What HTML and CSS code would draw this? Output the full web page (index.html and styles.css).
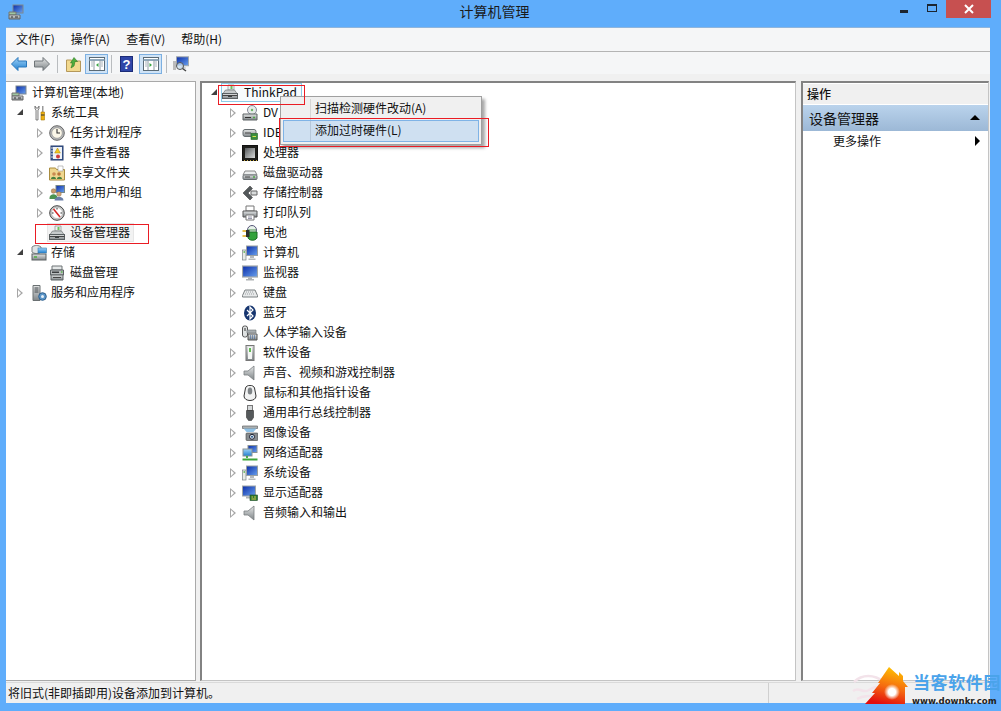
FILE: index.html
```html
<!DOCTYPE html>
<html lang="zh-CN">
<head>
<meta charset="utf-8">
<title>计算机管理</title>
<link rel="stylesheet" href="styles.css">
</head>
<body>
<svg class="defs" width="0" height="0" aria-hidden="true">
<defs>
<linearGradient id="scr" x1="0" y1="0" x2="1" y2="1"><stop offset="0" stop-color="#0a2ca8"/><stop offset="1" stop-color="#6aa2ee"/></linearGradient>
<linearGradient id="gry" x1="0" y1="0" x2="0" y2="1"><stop offset="0" stop-color="#e4e6e6"/><stop offset="1" stop-color="#7f8588"/></linearGradient>
<linearGradient id="blu" x1="0" y1="0" x2="0" y2="1"><stop offset="0" stop-color="#9fd2f7"/><stop offset="1" stop-color="#1f7fd0"/></linearGradient>
<linearGradient id="die" x1="0" y1="0" x2="1" y2="1"><stop offset="0" stop-color="#55585a"/><stop offset="1" stop-color="#d8dadb"/></linearGradient>
<linearGradient id="hs" x1="0.7" y1="0" x2="0.4" y2="1"><stop offset="0" stop-color="#ffc400"/><stop offset="0.55" stop-color="#f56a10"/><stop offset="1" stop-color="#e30d0d"/></linearGradient>
<radialGradient id="hw"><stop offset="0.45" stop-color="#fff"/><stop offset="1" stop-color="#fff" stop-opacity="0"/></radialGradient>
<symbol id="mgmt" viewBox="0 0 16 16"><rect x="5" y="1" width="10" height="8" fill="url(#scr)" stroke="#7c8790"/><path d="M1 8h7v3H1z" fill="#9fc7a0" stroke="#777"/><path d="M1 11h11v4H1z" fill="url(#gry)" stroke="#666"/><path d="M3 13h2M7 13h3" stroke="#333"/></symbol>
<symbol id="tools" viewBox="0 0 16 16"><path d="M4 1v3l1 1v10h2V5l1-1V1L7 3H5z" fill="#eee" stroke="#666" stroke-width=".8"/><path d="M11 1h1.500v6H11z" fill="#999"/><path d="M10 7h3.500v8H10z" fill="#eeb111" stroke="#a87a08" stroke-width=".6"/><path d="M10 10h3.500" stroke="#333"/></symbol>
<symbol id="clock" viewBox="0 0 16 16"><circle cx="8" cy="8" r="7.300" fill="#b7b9ba" stroke="#666"/><circle cx="8" cy="8" r="5.300" fill="#fbf7e8" stroke="#888" stroke-width=".6"/><path d="M8 4v4h3" fill="none" stroke="#333" stroke-width="1.100"/></symbol>
<symbol id="log" viewBox="0 0 16 16"><rect x="2" y="1" width="12" height="14" fill="#3f5f9a" stroke="#243c6c"/><rect x="4" y="2" width="9" height="12" fill="#eef2f6"/><path d="M2 3h2M2 6h2M2 9h2M2 12h2" stroke="#ddd"/><path d="M8.500 3l2.800 5H5.700z" fill="#f2c81e" stroke="#a58309" stroke-width=".5"/><circle cx="9" cy="11.500" r="2" fill="#cf3b3b"/></symbol>
<symbol id="share" viewBox="0 0 16 16"><path d="M0.500 3h6l1 1.500h8v10.500h-15z" fill="#efd78f" stroke="#a98c3f"/><path d="M9 1h5v5H9z" fill="#fff" stroke="#999" stroke-width=".6"/><circle cx="5" cy="9" r="1.800" fill="#c98a52"/><circle cx="10" cy="9" r="1.800" fill="#b9743a"/><path d="M2 14c0-3 5-3 5 0zM8 14c0-3 5-3 5 0z" fill="#46803e"/></symbol>
<symbol id="users" viewBox="0 0 16 16"><rect x="7" y="0.500" width="8.500" height="7" fill="url(#scr)" stroke="#788"/><circle cx="4.500" cy="6" r="2.300" fill="#c99a6b" stroke="#7a5a36" stroke-width=".4"/><path d="M0.500 13c0-5 8-5 8 0v1h-8z" fill="#4c9351"/><circle cx="10" cy="9" r="2.300" fill="#d2a67a" stroke="#7a5a36" stroke-width=".4"/><path d="M5.500 15.500c0-5 9-5 9 0z" fill="#6b7fa8"/></symbol>
<symbol id="perf" viewBox="0 0 16 16"><circle cx="8" cy="8" r="7.300" fill="#c9cccc" stroke="#444"/><circle cx="8" cy="8" r="5.500" fill="#fff" stroke="#999" stroke-width=".5"/><path d="M4.500 4l6.500 8" stroke="#d42424" stroke-width="1.500"/><path d="M8 3v1.500M3 8h1.500M13 8h-1.500" stroke="#333"/></symbol>
<symbol id="dev" viewBox="0 0 16 16"><path d="M6 1h6v5H6z" fill="#eef1f0" stroke="#8a9090" stroke-width=".7"/><path d="M8.500 2h2v3h-2z" fill="#6fbf60"/><path d="M3.500 6h9l2.500 3.500H1z" fill="#c7cbcc" stroke="#6d7274" stroke-width=".7"/><rect x="0.500" y="9.500" width="15" height="5" fill="url(#gry)" stroke="#5a6062"/><path d="M0.500 11.500h15" stroke="#444"/><path d="M6 11.500h4v1.500H6z" fill="#3b3f41"/></symbol>
<symbol id="store" viewBox="0 0 16 16"><path d="M1 2c2-2 7-2 9 0v5c-2 2-7 2-9 0z" fill="#dfe3e4" stroke="#7a8082"/><rect x="7" y="3" width="8.500" height="5" fill="url(#blu)" stroke="#3c7fae" stroke-width=".6"/><rect x="1" y="9" width="14" height="6" fill="url(#gry)" stroke="#5a6062"/><path d="M3 12h3" stroke="#57b04c" stroke-width="1.600"/></symbol>
<symbol id="disk" viewBox="0 0 16 16"><path d="M3 1h10v4H3z" fill="#e4e7e7" stroke="#6e7476"/><path d="M1.500 5h13v5h-13z" fill="#b9bdbe" stroke="#5d6365"/><rect x="3" y="6.500" width="7" height="1.500" fill="#3c3f41"/><path d="M12 7h1.500" stroke="#5ab64c" stroke-width="1.500"/><path d="M2 10h12v5H2z" fill="url(#gry)" stroke="#5d6365"/><path d="M4 12.500h8" stroke="#444"/></symbol>
<symbol id="svc" viewBox="0 0 16 16"><path d="M2 0.500h7v15H2z" fill="url(#gry)" stroke="#6a7072"/><path d="M3.500 3h4M3.500 5h4M3.500 7h4" stroke="#40464a"/><circle cx="11.500" cy="11.500" r="3.800" fill="#5b95c8" stroke="#2f5f8c"/><circle cx="11.500" cy="11.500" r="1.500" fill="#e6f0f8"/></symbol>
<symbol id="dvd" viewBox="0 0 16 16"><circle cx="10" cy="5" r="4.500" fill="#e6ecea" stroke="#889"/><circle cx="10" cy="5" r="1.200" fill="#6fb46a"/><path d="M1 9h14v6H1z" fill="url(#gry)" stroke="#5d6365"/><path d="M3 12.500h6" stroke="#333"/><path d="M11 12.500h2" stroke="#4ea746" stroke-width="1.400"/></symbol>
<symbol id="ide" viewBox="0 0 16 16"><rect x="1" y="4.500" width="13" height="7" rx="2" fill="url(#gry)" stroke="#666d70"/><path d="M3 8h6" stroke="#444"/><rect x="9" y="8.500" width="6.500" height="6" fill="#3a8d3c" stroke="#1f5f21" stroke-width=".6"/><path d="M10.500 11.500h3.500" stroke="#d6e24a"/></symbol>
<symbol id="cpu" viewBox="0 0 16 16"><rect x=".5" y=".5" width="15" height="15" fill="#1f1f1c" stroke="#111"/><rect x="3" y="3" width="10" height="10" fill="url(#die)"/><path d="M2 15.500h1M5 15.500h1M8 15.500h1M11 15.500h1M14 15.500h1" stroke="#c9a83a"/></symbol>
<symbol id="hdd" viewBox="0 0 16 16"><path d="M3 6h10l2 4H1z" fill="#eceeee" stroke="#888"/><rect x="1" y="10" width="14" height="4.500" rx="1" fill="url(#gry)" stroke="#666d70"/><path d="M3 12h5" stroke="#444"/><path d="M11 12h2" stroke="#4ea746" stroke-width="1.300"/></symbol>
<symbol id="ctrl" viewBox="0 0 16 16"><path d="M8 1L1 8l7 7 2.500-2.500L6 8l4.500-4.500z" fill="#53585a" stroke="#333" stroke-width=".5"/><path d="M9 6h6v4H9z" fill="#d9dcdc" stroke="#666"/></symbol>
<symbol id="print" viewBox="0 0 16 16"><path d="M4 1h8v5H4z" fill="#fff" stroke="#777"/><path d="M1 6h14v6H1z" fill="url(#gry)" stroke="#555"/><path d="M4 10h8v5H4z" fill="#fff" stroke="#777"/><path d="M6 12h4M6 13.500h4" stroke="#99a"/></symbol>
<symbol id="batt" viewBox="0 0 16 16"><circle cx="10" cy="5" r="4.500" fill="#e8f2ea" stroke="#557"/><path d="M6 5h8" stroke="#4d8e4e"/><path d="M6 7h9v6c-2 3-7 3-9 0z" fill="#33a23a" stroke="#1d6d22"/><path d="M0.500 6h4M0.500 11h4" stroke="#e0a918" stroke-width="1.300"/><path d="M4 5h3.500v7H4z" fill="#2b2f30"/></symbol>
<symbol id="pc" viewBox="0 0 16 16"><rect x="0.500" y="5" width="3.500" height="10" fill="#e7ebe7" stroke="#7c8486" stroke-width=".7"/><path d="M1.500 7h1.500" stroke="#56b24a" stroke-width="1.400"/><rect x="4.500" y="1" width="11" height="9.500" fill="url(#scr)" stroke="#9aa0a2"/><path d="M8 11h4v2H8zM6.500 13.500h7V15h-7z" fill="#b5b9ba"/></symbol>
<symbol id="mon" viewBox="0 0 16 16"><rect x="0.500" y="1" width="15" height="11" fill="url(#scr)" stroke="#a3a8aa" stroke-width="1.200"/><path d="M6 12.500h4V14H6zM4 14h8v1.500H4z" fill="#aeb2b4"/></symbol>
<symbol id="kbd" viewBox="0 0 16 16"><path d="M3 5h10l2.500 5.500v1.500H0.500v-1.500z" fill="#e7e9ea" stroke="#7b8082"/><path d="M4 7h8M3 9h10" stroke="#9a9fa2" stroke-dasharray="1 1"/></symbol>
<symbol id="bt" viewBox="0 0 16 16"><ellipse cx="8" cy="8" rx="6" ry="7.500" fill="#16356f"/><path d="M5 5l6 6-3 3V2l3 3-6 6" fill="none" stroke="#fff" stroke-width="1.200"/></symbol>
<symbol id="hid" viewBox="0 0 16 16"><rect x="0.500" y="1" width="5" height="11" rx="2" fill="#dfe2e2" stroke="#555"/><path d="M3 3v3" stroke="#333"/><path d="M5 5h9v3H5z" fill="#a8adb0" stroke="#6d7274" stroke-width=".6"/><path d="M6 9h9v6H6z" fill="url(#gry)" stroke="#555"/><path d="M8 11h5M8 13h5" stroke="#335c99" stroke-dasharray="1 1"/></symbol>
<symbol id="soft" viewBox="0 0 16 16"><rect x="4" y="0.500" width="8" height="15" fill="url(#gry)" stroke="#777"/><rect x="6" y="2" width="4" height="12" fill="#f4f6f4"/><path d="M8 3v4" stroke="#62bb55" stroke-width="2"/></symbol>
<symbol id="spk" viewBox="0 0 16 16"><path d="M2 6h4l6-5v14l-6-5H2z" fill="url(#gry)" stroke="#787e80" stroke-width=".8"/></symbol>
<symbol id="mouse" viewBox="0 0 16 16"><path d="M3.500 3c1-3.500 8-3.500 9 0l1.500 8c0 6-12 6-12 0z" fill="#f1f2f2" stroke="#333"/><ellipse cx="8" cy="6" rx="2.300" ry="3.500" fill="#7e8386"/></symbol>
<symbol id="usb" viewBox="0 0 16 16"><rect x="5.500" y="0.500" width="5" height="5" fill="#d5d8d9" stroke="#777"/><path d="M4.500 5.500h7v7l-2 3h-3l-2-3z" fill="#55595b" stroke="#333" stroke-width=".6"/></symbol>
<symbol id="img" viewBox="0 0 16 16"><path d="M0.500 1h15v2.500h-15z" fill="#aab0b2" stroke="#666" stroke-width=".7"/><path d="M1.500 3.500h13l-3 3.500h-7z" fill="#8fc1e6"/><rect x="4" y="8" width="12" height="7.500" rx="1" fill="#878c8f" stroke="#444" stroke-width=".6"/><circle cx="10" cy="11.800" r="2.500" fill="#dbe8f2" stroke="#223"/><circle cx="10" cy="11.800" r="1" fill="#27578a"/></symbol>
<symbol id="net" viewBox="0 0 16 16"><rect x="6" y="0.500" width="9" height="7" fill="url(#scr)" stroke="#8a9294"/><rect x="1" y="4" width="9" height="7" fill="url(#blu)" stroke="#8a9294"/><path d="M5 11v2M0.500 14.500h15" stroke="#3ea63b" stroke-width="1.800"/></symbol>
<symbol id="disp" viewBox="0 0 16 16"><rect x="0.500" y="1" width="13" height="10" fill="url(#scr)" stroke="#a0a6a8"/><path d="M4 11.500h6v2H4z" fill="#aeb2b4"/><rect x="8" y="10" width="7.500" height="5.500" fill="#2d7a34" stroke="#1a4a1f" stroke-width=".6"/><path d="M9.500 12h1.500M12 12h2M9.500 14h4.500" stroke="#d9c84a"/></symbol>
</defs>
</svg>

<div class="window">
  <header class="titlebar">
    <svg class="ico app-ico"><use href="#mgmt"/></svg>
    <div class="title">计算机管理</div>
    <div class="controls">
      <span class="ctl-min"></span>
      <span class="ctl-max"></span>
      <span class="ctl-close">
        <svg width="10" height="10" viewBox="0 0 10 10"><path d="M1 1l8 8M9 1l-8 8" stroke="#fff" stroke-width="2"/></svg>
      </span>
    </div>
  </header>

  <main class="client">
    <nav class="menubar">
      <span>文件(F)</span><span>操作(A)</span><span>查看(V)</span><span>帮助(H)</span>
    </nav>

    <div class="toolbar">
      <svg class="tool t-back" width="16" height="14" viewBox="0 0 16 14"><path d="M0.500 7L7 0.500V4h8.500v6H7v3.500z" fill="url(#blu)" stroke="#2a78bd"/></svg>
      <svg class="tool t-fwd" width="16" height="14" viewBox="0 0 16 14"><path d="M15.500 7L9 0.500V4H0.500v6H9v3.500z" fill="url(#gry)" stroke="#6f7578"/></svg>
      <span class="sep"></span>
      <svg class="tool t-up" width="15" height="16" viewBox="0 0 15 16"><path d="M0.500 4h5l1 1h8v10.500H.5z" fill="#f2d98e" stroke="#b5985a"/><path d="M5 12l1.500-5H4.500l3.500-5.500 3.500 4H9L8 10z" fill="#4fae3e" stroke="#2d7a22" stroke-width=".6"/></svg>
      <span class="togglebtn">
        <svg width="16" height="14" viewBox="0 0 16 14"><rect x=".5" y=".5" width="15" height="13" fill="#fff" stroke="#5a6a75"/><path d="M.5 3h15" stroke="#8fa8bb" stroke-width="2"/><path d="M5 3v10M11 3v10" stroke="#8e9aa3"/><path d="M9.500 6v4L7 8z" fill="#3aa543"/><path d="M2 5h2M2 7h2M2 9h2M12 5h2M12 7h2M12 9h2" stroke="#aab4bb"/></svg>
      </span>
      <span class="sep sep-b"></span>
      <svg class="tool t-help" width="13" height="16" viewBox="0 0 13 16"><rect x=".5" y=".5" width="12" height="15" fill="#2f46a8" stroke="#1c2c78"/><text x="6.500" y="12.500" class="helpq" text-anchor="middle">?</text></svg>
      <span class="togglebtn tb-b">
        <svg width="16" height="14" viewBox="0 0 16 14"><rect x=".5" y=".5" width="15" height="13" fill="#fff" stroke="#5a6a75"/><path d="M.5 3h15" stroke="#8fa8bb" stroke-width="2"/><path d="M5 3v10M11 3v10" stroke="#8e9aa3"/><path d="M6.500 6v4L9 8z" fill="#3aa543"/><path d="M2 5h2M2 7h2M2 9h2M12 5h2M12 7h2M12 9h2" stroke="#aab4bb"/></svg>
      </span>
      <span class="sep sep-c"></span>
      <svg class="tool t-scan" width="16" height="16"><use href="#mon" x="3" width="13" height="13"/><circle cx="7" cy="10" r="3.500" fill="#cfe4f5" fill-opacity=".7" stroke="#555"/><path d="M0 5h3v9H0z" fill="#bbb"/><path d="M9.500 12.500L13 15" stroke="#444" stroke-width="1.500"/></svg>
    </div>

    <div class="panes">
      <section class="pane pane-left">
        <div class="row r0"><svg class="ico"><use href="#mgmt"/></svg><span class="label">计算机管理(本地)</span></div>
        <div class="row l1"><i class="tw open"></i><svg class="ico"><use href="#tools"/></svg><span class="label">系统工具</span></div>
        <div class="row l2"><i class="tw"></i><svg class="ico"><use href="#clock"/></svg><span class="label">任务计划程序</span></div>
        <div class="row l2"><i class="tw"></i><svg class="ico"><use href="#log"/></svg><span class="label">事件查看器</span></div>
        <div class="row l2"><i class="tw"></i><svg class="ico"><use href="#share"/></svg><span class="label">共享文件夹</span></div>
        <div class="row l2"><i class="tw"></i><svg class="ico"><use href="#users"/></svg><span class="label">本地用户和组</span></div>
        <div class="row l2"><i class="tw"></i><svg class="ico"><use href="#perf"/></svg><span class="label">性能</span></div>
        <div class="row l2 selected-dim"><i class="tw none"></i><svg class="ico"><use href="#dev"/></svg><span class="label">设备管理器</span></div>
        <div class="row l1"><i class="tw open"></i><svg class="ico"><use href="#store"/></svg><span class="label">存储</span></div>
        <div class="row l2"><i class="tw none"></i><svg class="ico"><use href="#disk"/></svg><span class="label">磁盘管理</span></div>
        <div class="row l1"><i class="tw"></i><svg class="ico"><use href="#svc"/></svg><span class="label">服务和应用程序</span></div>
        <span class="redbox rb-tree"></span>
      </section>

      <section class="pane pane-center">
        <div class="row c0"><i class="tw open"></i><span class="root-sel"><svg class="ico"><use href="#dev"/></svg><span class="label">ThinkPad</span></span></div>
        <div class="row c1"><i class="tw"></i><svg class="ico"><use href="#dvd"/></svg><span class="label">DV</span></div>
        <div class="row c1"><i class="tw"></i><svg class="ico"><use href="#ide"/></svg><span class="label">IDE</span></div>
        <div class="row c1"><i class="tw"></i><svg class="ico"><use href="#cpu"/></svg><span class="label">处理器</span></div>
        <div class="row c1"><i class="tw"></i><svg class="ico"><use href="#hdd"/></svg><span class="label">磁盘驱动器</span></div>
        <div class="row c1"><i class="tw"></i><svg class="ico"><use href="#ctrl"/></svg><span class="label">存储控制器</span></div>
        <div class="row c1"><i class="tw"></i><svg class="ico"><use href="#print"/></svg><span class="label">打印队列</span></div>
        <div class="row c1"><i class="tw"></i><svg class="ico"><use href="#batt"/></svg><span class="label">电池</span></div>
        <div class="row c1"><i class="tw"></i><svg class="ico"><use href="#pc"/></svg><span class="label">计算机</span></div>
        <div class="row c1"><i class="tw"></i><svg class="ico"><use href="#mon"/></svg><span class="label">监视器</span></div>
        <div class="row c1"><i class="tw"></i><svg class="ico"><use href="#kbd"/></svg><span class="label">键盘</span></div>
        <div class="row c1"><i class="tw"></i><svg class="ico"><use href="#bt"/></svg><span class="label">蓝牙</span></div>
        <div class="row c1"><i class="tw"></i><svg class="ico"><use href="#hid"/></svg><span class="label">人体学输入设备</span></div>
        <div class="row c1"><i class="tw"></i><svg class="ico"><use href="#soft"/></svg><span class="label">软件设备</span></div>
        <div class="row c1"><i class="tw"></i><svg class="ico"><use href="#spk"/></svg><span class="label">声音、视频和游戏控制器</span></div>
        <div class="row c1"><i class="tw"></i><svg class="ico"><use href="#mouse"/></svg><span class="label">鼠标和其他指针设备</span></div>
        <div class="row c1"><i class="tw"></i><svg class="ico"><use href="#usb"/></svg><span class="label">通用串行总线控制器</span></div>
        <div class="row c1"><i class="tw"></i><svg class="ico"><use href="#img"/></svg><span class="label">图像设备</span></div>
        <div class="row c1"><i class="tw"></i><svg class="ico"><use href="#net"/></svg><span class="label">网络适配器</span></div>
        <div class="row c1"><i class="tw"></i><svg class="ico"><use href="#pc"/></svg><span class="label">系统设备</span></div>
        <div class="row c1"><i class="tw"></i><svg class="ico"><use href="#disp"/></svg><span class="label">显示适配器</span></div>
        <div class="row c1"><i class="tw"></i><svg class="ico"><use href="#spk"/></svg><span class="label">音频输入和输出</span></div>

        <div class="ctxmenu">
          <div class="ctx-item">扫描检测硬件改动(A)</div>
          <div class="ctx-item hot">添加过时硬件(L)</div>
        </div>
        <span class="redbox rb-root"></span>
        <span class="redbox rb-item"></span>
      </section>

      <aside class="pane pane-right">
        <div class="act-head">操作</div>
        <div class="act-group"><span>设备管理器</span><i class="tri-up"></i></div>
        <div class="act-item"><span>更多操作</span><i class="tri-right"></i></div>
      </aside>
    </div>

    <footer class="statusbar">
      <span class="st-main">将旧式(非即插即用)设备添加到计算机。</span>
      <span class="st-cell"></span>
    </footer>
  </main>

  <div class="watermark">
    <svg class="wm-swirl" width="34" height="30" viewBox="0 0 34 30"><g fill="none" stroke="#f3e3ea" stroke-width="2.500"><path d="M2 9C10 1 22 1 32 9"/><path d="M1 18c7-5 9 3 16-1s9-4 16 1"/><path d="M5 26c7-4 17-4 24 0"/></g></svg>
    <svg class="wm-house" width="43" height="37" viewBox="0 0 43 37"><path d="M0 37L10 26H7L15 16H13L24 0L34 9V5L38 9V14L43 20H40V37Z" fill="url(#hs)"/><circle cx="27" cy="25" r="8" fill="url(#hw)"/></svg>
    <div class="wm-name">当客软件园</div>
    <div class="wm-url">www.downkr.com</div>
  </div>
</div>
</body>
</html>
```

FILE: styles.css
```css
* { box-sizing: border-box; }

html, body {
  margin: 0;
  padding: 0;
  width: 1001px;
  height: 711px;
  overflow: hidden;
}

body {
  font-family: "Noto Sans CJK SC", "Liberation Sans", sans-serif;
  font-size: 12px;
  color: #111;
  background: #5fadfb;
}

.defs { position: absolute; }

.window {
  position: relative;
  width: 1001px;
  height: 711px;
  display: flex;
  flex-direction: column;
  background: #5fadfb;
}

.ico { width: 16px; height: 16px; flex: none; display: block; }

/* title bar */
.titlebar {
  position: relative;
  height: 27px;
  flex: none;
  display: flex;
  align-items: flex-start;
  padding: 4px 10px 0 8px;
}
.title {
  position: absolute;
  left: 0;
  right: 12px;
  top: 1px;
  text-align: center;
  font-size: 14px;
  line-height: 20px;
  color: #1a1a1a;
}
.controls {
  position: absolute;
  top: 0;
  right: 10px;
  display: flex;
}
.ctl-min {
  width: 8px;
  height: 3px;
  margin: 10px 19px 0 0;
  background: #1c2530;
}
.ctl-max {
  width: 10px;
  height: 8px;
  margin: 4px 9px 0 0;
  border: 1px solid #1c2530;
  border-top-width: 2px;
}
.ctl-close {
  width: 45px;
  height: 18px;
  background: #c75050;
  display: flex;
  align-items: center;
  justify-content: center;
}

/* client */
.client {
  margin: 0 11px 8px 6px;
  flex: 1;
  min-height: 0;
  display: flex;
  flex-direction: column;
  background: #f0f0f0;
  border-top: 1px solid #8fb5dc;
}

.menubar {
  height: 24px;
  flex: none;
  display: flex;
  gap: 16px;
  align-items: center;
  padding: 0 0 2px 10px;
  background: #f5f6f7;
  border-bottom: 1px solid #b4b4b4;
  line-height: 16px;
}

.toolbar {
  height: 22px;
  flex: none;
  display: flex;
  align-items: center;
  padding: 1px 0 0 5px;
  background: #f5f6f7;
}
.tool { flex: none; display: block; }
.t-fwd { margin-left: 7px; }
.t-up { margin-left: 8px; }
.t-help { margin-left: 8px; }
.t-scan { margin-left: 6px; }
.sep {
  width: 1px;
  height: 18px;
  margin-left: 7px;
  background: #b9bcbf;
}
.sep-b { margin-left: 3px; }
.sep-c { margin-left: 4px; }
.togglebtn {
  width: 23px;
  height: 20px;
  margin-left: 4px;
  display: flex;
  align-items: center;
  justify-content: center;
  background: #cfe3f6;
  border: 1px solid #7cb0e2;
}
.tb-b { margin-left: 6px; }
.helpq {
  font-family: "Liberation Sans", sans-serif;
  font-size: 13px;
  font-weight: 700;
  fill: #fff;
}

/* panes */
.panes {
  margin-top: 7px;
  flex: 1;
  min-height: 0;
  display: flex;
}
.pane {
  position: relative;
  background: #fff;
  height: 600px;
}
.pane-left {
  width: 190px;
  margin-right: 4px;
  border: 1px solid #a9a9a9;
  border-left: 0;
}
.pane-center {
  width: 596px;
  margin-right: 5px;
  border-top: 2px solid #828282;
  border-left: 2px solid #828282;
  border-right: 1px solid #c4c4c4;
  border-bottom: 1px solid #c4c4c4;
}
.pane-right {
  width: 188px;
  border-top: 2px solid #828282;
  border-left: 2px solid #828282;
  border-right: 1px solid #c4c4c4;
  border-bottom: 1px solid #c4c4c4;
  padding-top: 1px;
}

/* trees */
.row {
  height: 20px;
  display: flex;
  align-items: center;
  white-space: nowrap;
}
.row .ico { margin-top: 2px; }
.label { margin-left: 5px; line-height: 16px; }
.r0 { padding-left: 5px; }
.l1 { padding-left: 9px; }
.l2 { padding-left: 29px; }
.l1 .ico { margin-left: 6px; }
.l1 .label { margin-left: 4px; }
.l2 .ico { margin-left: 4px; }
.c0 { padding-left: 7px; margin-top: -1px; }
.c1 { padding-left: 26px; }
.c1 .ico { margin-left: 4px; }

.tw {
  width: 10px;
  height: 10px;
  flex: none;
  position: relative;
  display: block;
}
.tw::before {
  content: "";
  position: absolute;
  left: 2px;
  top: 1px;
  width: 0;
  height: 0;
  border-left: 6px solid #a6a6a6;
  border-top: 5px solid transparent;
  border-bottom: 5px solid transparent;
}
.tw::after {
  content: "";
  position: absolute;
  left: 3px;
  top: 3px;
  width: 0;
  height: 0;
  border-left: 3px solid #fff;
  border-top: 3px solid transparent;
  border-bottom: 3px solid transparent;
}
.tw.open::before {
  left: 2px;
  top: 2px;
  border-left: 6px solid transparent;
  border-top: 0;
  border-bottom: 6px solid #404040;
}
.tw.open::after, .tw.none::before, .tw.none::after { display: none; }

.selected-dim { position: relative; }
.selected-dim::before {
  content: "";
  position: absolute;
  left: 41px;
  right: 61px;
  top: 1px;
  bottom: 0;
  background: #f2f2f2;
  border: 1px solid #e6e6e6;
  z-index: 0;
}
.selected-dim .ico, .selected-dim .label { position: relative; z-index: 1; }

.root-sel {
  display: flex;
  align-items: center;
  height: 19px;
  width: 81px;
  margin-left: 2px;
  border: 1px solid #8fcbe8;
  background: #f7fbfd;
}
.root-sel .ico { margin-top: 0; }
.root-sel .label { margin-left: 6px; }

/* context menu */
.ctxmenu {
  position: absolute;
  left: 78px;
  top: 13px;
  width: 202px;
  height: 49px;
  padding: 1px 2px;
  background: #f0f0f0;
  border: 1px solid #a0a0a0;
  box-shadow: 3px 3px 3px rgba(0, 0, 0, .35);
}
.ctxmenu::before {
  content: "";
  position: absolute;
  left: 29px;
  top: 2px;
  bottom: 2px;
  width: 1px;
  background: #d6d6d6;
}
.ctx-item {
  position: relative;
  height: 22px;
  padding-left: 31px;
  line-height: 18px;
  border: 1px solid transparent;
}
.ctx-item.hot {
  background: #cfe0f1;
  border-color: #7fb3e6;
}
.ctx-item.hot::before {
  content: "";
  position: absolute;
  left: 26px;
  top: 0;
  bottom: 0;
  width: 1px;
  background: #b6c8da;
}

/* red annotations */
.redbox {
  position: absolute;
  border: 1px solid #ea1c24;
  pointer-events: none;
}
.rb-tree { left: 29px; top: 142px; width: 114px; height: 20px; }
.rb-root { left: 16px; top: 2px; width: 87px; height: 20px; }
.rb-item { left: 77px; top: 35px; width: 210px; height: 29px; }

/* action pane */
.act-head {
  height: 20px;
  background: #f0f0f0;
  padding-left: 4px;
  line-height: 19px;
  font-weight: 500;
}
.act-group {
  height: 26px;
  margin-top: 1px;
  padding: 0 6px 1px 6px;
  display: flex;
  align-items: center;
  justify-content: space-between;
  font-size: 14px;
  background: linear-gradient(#bad3ec, #9cb8d6);
}
.tri-up {
  width: 0;
  height: 0;
  border-left: 5px solid transparent;
  border-right: 5px solid transparent;
  border-bottom: 5px solid #000;
  margin-right: 2px;
}
.act-item {
  height: 22px;
  padding: 0 8px 3px 30px;
  display: flex;
  align-items: center;
  justify-content: space-between;
}
.tri-right {
  width: 0;
  height: 0;
  border-top: 5px solid transparent;
  border-bottom: 5px solid transparent;
  border-left: 5px solid #000;
}

/* status bar */
.statusbar {
  height: 21px;
  flex: none;
  display: flex;
  background: #f0f0f0;
  border-top: 1px solid #dadada;
}
.st-main {
  width: 763px;
  padding-left: 2px;
  line-height: 20px;
  border-right: 1px solid #d0d0d0;
}
.st-cell { flex: 1; }

/* watermark */
.watermark {
  position: absolute;
  left: 850px;
  top: 660px;
  width: 151px;
  height: 51px;
  overflow: hidden;
}
.wm-swirl { position: absolute; left: 2px; top: 13px; }
.wm-house { position: absolute; left: 15px; top: 7px; }
.wm-name {
  position: absolute;
  left: 63px;
  top: 10px;
  font-size: 17px;
  line-height: 24px;
  font-weight: 700;
  letter-spacing: .6px;
  color: #4aa3ea;
  white-space: nowrap;
}
.wm-url {
  position: absolute;
  left: 62px;
  top: 33px;
  font-family: "DejaVu Sans", sans-serif;
  font-size: 8.6px;
  line-height: 16px;
  font-weight: 700;
  color: #222;
  white-space: nowrap;
}
```
